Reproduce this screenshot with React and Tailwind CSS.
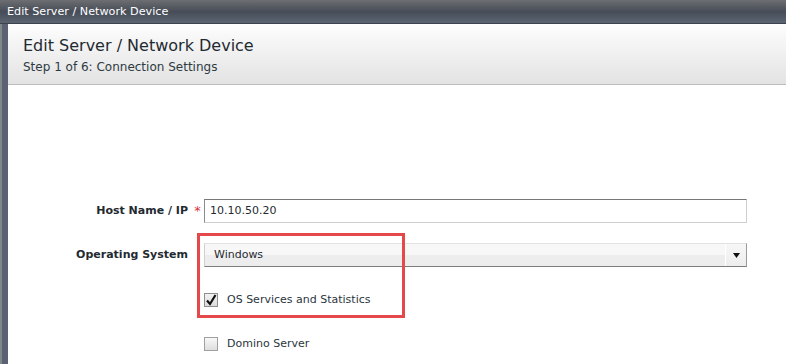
import { useState } from 'react';

const App = () => {
  const [osStats, setOsStats] = useState(true);
  const [domino, setDomino] = useState(false);

  return (
    <div className="w-[786px] h-[364px] overflow-hidden bg-white font-['DejaVu_Sans',Verdana,sans-serif] relative">
      {/* window title bar */}
      <div className="h-[24px] bg-gradient-to-b from-[#6c6e71] via-[#474d58] to-[#5a6471] border-b border-[#3d434e] flex items-center pl-[7px]">
        <span className="text-white text-[11.2px] leading-none">Edit Server / Network Device</span>
      </div>

      <div className="flex h-[340px]">
        <div className="w-[8px] flex shrink-0">
          <div className="w-[2px] bg-[#7d8a86]"></div>
          <div className="flex-1 bg-[#5a6274]"></div>
        </div>

        <div className="flex-1">
          {/* header */}
          <div className="h-[61px] bg-gradient-to-b from-[#fdfdfd] to-[#e3e3e3] border-b border-[#bcbcbc] pl-[15px] pt-[12px]">
            <h1 className="text-[16px] leading-[20px] text-[#1f2a31]">Edit Server / Network Device</h1>
            <p className="text-[12px] leading-[16px] mt-[3px] text-[#2d3a42]">Step 1 of 6: Connection Settings</p>
          </div>

          {/* form */}
          <div className="pt-[114px] text-[11px] text-[#1f2a31]">
            <div className="flex items-center">
              <label className="w-[180px] text-right font-bold">Host Name / IP</label>
              <span className="w-[16px] text-center text-[#d9333a] text-[13px] pl-[3px]">*</span>
              <div className="w-[543px] h-[24px] border border-t-[#777] border-l-[#8a8a8a] border-r-[#cfcfcf] border-b-[#cfcfcf] bg-white flex items-center px-[5px] text-[11px]">
                10.10.50.20
              </div>
            </div>

            <div className="flex items-center mt-[20px]">
              <label className="w-[180px] text-right font-bold">Operating System</label>
              <span className="w-[16px]"></span>
              <div className="w-[543px] h-[24px] border border-t-[#e2e2e2] border-l-[#d0d0d0] border-r-[#9a9a9a] border-b-[#7c7c7c] flex">
                <div className="flex-1 flex flex-col">
                  <div className="h-[11px] bg-[#f7f7f7]"></div>
                  <div className="flex-1 bg-[#ededed]"></div>
                </div>
                <div className="w-[1px] bg-white my-[2px]"></div>
                <div className="w-[20px] flex items-center justify-center bg-gradient-to-b from-[#f7f7f7] to-[#ededed]">
                  <svg width="7" height="5" viewBox="0 0 7 5"><path d="M0 0h7L3.5 5z" fill="#111" /></svg>
                </div>
              </div>
            </div>
            <div className="relative -mt-[24px] ml-[197px] h-[24px] flex items-center pl-[9px] text-[11px] pointer-events-none">
              Windows
            </div>

            <div className="ml-[196px] mt-[25px] flex items-center gap-[9px] h-[16px]">
              <button
                onClick={() => setOsStats(!osStats)}
                className="w-[14px] h-[14px] border border-[#8e8e8e] bg-gradient-to-b from-[#f2f2f2] to-[#dcdcdc] flex items-center justify-center"
              >
                {osStats && (
                  <svg width="12" height="12" viewBox="0 0 12 12">
                    <path d="M2 6.5l3 3.5 5.5-9" stroke="#111" strokeWidth="2.2" fill="none" />
                  </svg>
                )}
              </button>
              <span className="text-[11px] text-[#2b363d]">OS Services and Statistics</span>
            </div>

            <div className="ml-[196px] mt-[28px] flex items-center gap-[9px] h-[16px]">
              <button
                onClick={() => setDomino(!domino)}
                className="w-[14px] h-[14px] border border-[#a0a0a0] bg-gradient-to-b from-[#f8f8f8] to-[#dedede] flex items-center justify-center"
              >
                {domino && (
                  <svg width="12" height="12" viewBox="0 0 12 12">
                    <path d="M2 6.5l3 3.5 5.5-9" stroke="#111" strokeWidth="2.2" fill="none" />
                  </svg>
                )}
              </button>
              <span className="text-[11px] text-[#2b363d]">Domino Server</span>
            </div>
          </div>
        </div>
      </div>

      {/* annotation box */}
      <div className="absolute left-[197px] top-[233px] w-[208px] h-[85px] border-[3px] border-[#e5484b] pointer-events-none"></div>
    </div>
  );
};

export default App;
